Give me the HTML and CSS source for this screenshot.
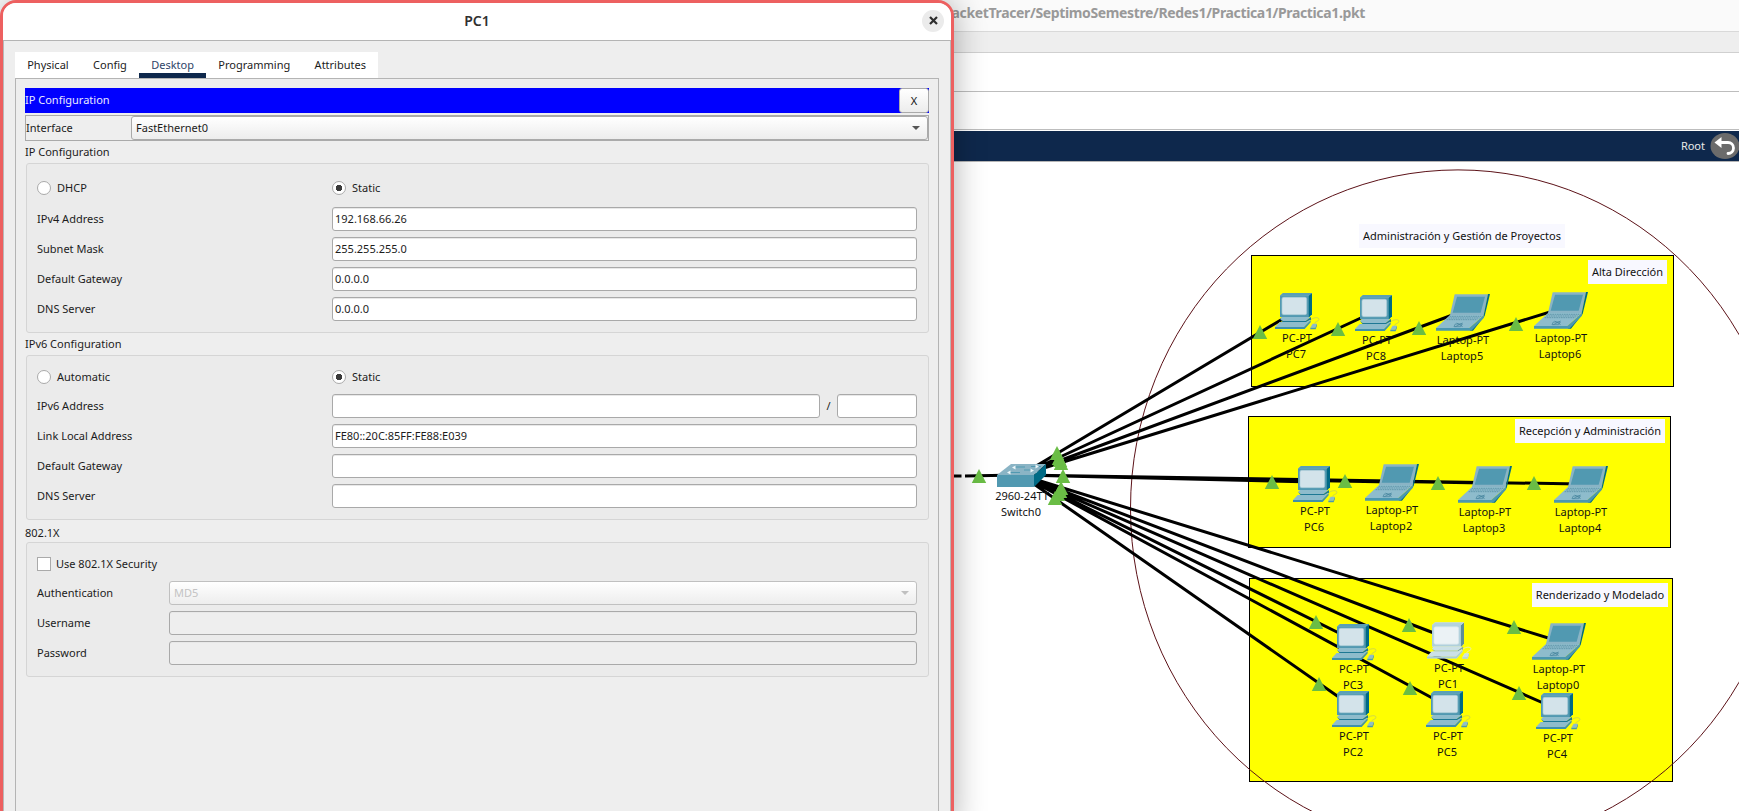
FILE: index.html
```
<!DOCTYPE html>
<html lang="es"><head><meta charset="utf-8"><title>PC1</title><link rel="stylesheet" href="styles.css"></head>
<body>
<div class="screen">
<main class="main-window">
  <header class="main-title">PacketTracer/SeptimoSemestre/Redes1/Practica1/Practica1.pkt</header>
  <div class="menubar"></div>
  <div class="toolbar"></div>
  <div class="toolbar second"></div>
  <div class="navbar"><span>Root</span>
    <svg width="30" height="30" viewBox="0 0 30 30"><ellipse cx="15" cy="13" rx="14.500" ry="13" fill="#6b6b6b"/><path d="M10 9.500H18a5.500 5.500 0 0 1 0 11" fill="none" stroke="#fff" stroke-width="2.800" stroke-linecap="round"/><path d="M4.500 9.500l7-5.500v11z" fill="#fff"/></svg>
  </div>
  <svg class="canvas" width="785" height="649" viewBox="954 162 785 649">
    <defs>
      <g id="pc"><g transform="scale(.3333)">
        <path d="M15 8L24 0H111V64L101 72H15z" fill="#8ab4c5"/>
        <path d="M15 8H101V72H15z" fill="#5199b1"/><path d="M101 8L111 0V64L101 74z" fill="#006a85"/><path d="M15 8L24 0H111L101 8z" fill="#5aa0b6"/>
        <rect x="21" y="13" width="74" height="52" rx="5" fill="#d3e3ea" stroke="#a9cad6" stroke-width="2"/>
        <path d="M21 72H103V76L92 84H23L15 78z" fill="#8ebccc"/><path d="M15 78L23 84H92L108 72V80L94 88H23z" fill="#1d7894"/>
        <path d="M14 87H93L105 80V84L87 102H0z" fill="#8ebccc"/><path d="M0 102H87L107 82V88L89 108H0z" fill="#3f90aa"/>
        <path d="M108 80C116 72 136 72 131 81C129 87 120 84 119 92" fill="none" stroke="#b9c46a" stroke-width="2"/>
        <path d="M106 104L113 92H126L121 104z" fill="#8ebccc"/><path d="M106 104H121L126 92V98L122 109H106z" fill="#4a97b0"/>
      </g></g>
      <g id="laptop"><g transform="scale(.3333)">
        <path d="M56 1H156L143 63H42z" fill="#8ab4c5"/><path d="M63 8H147L134 56H50z" fill="#5199b1"/>
        <path d="M156 0H162L146 66L111 110H101L143 64z" fill="#006a85"/>
        <path d="M42 63H144L100 102H0z" fill="#8ebccc"/><path d="M0 102H100L144 64V71L106 110H0z" fill="#4a97b0"/>
        <path d="M41 67H136M37 72H131M32 77H124" stroke="#4d879b" stroke-width="2" stroke-dasharray="5 2"/>
        <path d="M58 90H79L74 98H54zM62 87L80 98M80 87L58 98" fill="none" stroke="#3f819a" stroke-width="2"/>
      </g></g>
      <path id="up" d="M0-8L7.200 6H-7.200z" fill="#6abd45"/>
    </defs>
    <rect x="1251.500" y="255.500" width="422" height="131" class="zone"/>
    <rect x="1248.500" y="416.500" width="422" height="131" class="zone"/>
    <rect x="1249.500" y="578.500" width="423" height="203" class="zone"/>
    <ellipse cx="1458" cy="508.400" rx="327.500" ry="338.500" class="site"/>
    <g class="links">
      <path d="M954 476h7.500M965 476L1020 475"/>
      <path d="M1021 475L1296 311M1021 475L1376 311M1021 475L1466 310M1021 475L1563 308"/>
      <path d="M1021 475L1314 482M1021 475L1391 482M1021 475L1484 483M1021 475L1580 484"/>
      <path d="M1021 475L1558 641M1021 475L1447 638M1021 475L1557 709M1021 475L1353 640M1021 475L1447 706M1021 475L1353 707"/>
    </g>
    <g class="names">
      <text x="1297" y="342">PC-PT</text><text x="1296" y="358">PC7</text>
      <text x="1377" y="344">PC-PT</text><text x="1376" y="360">PC8</text>
      <text x="1463" y="344">Laptop-PT</text><text x="1462" y="360">Laptop5</text>
      <text x="1561" y="342">Laptop-PT</text><text x="1560" y="358">Laptop6</text>
      <text x="1315" y="515">PC-PT</text><text x="1314" y="531">PC6</text>
      <text x="1392" y="514">Laptop-PT</text><text x="1391" y="530">Laptop2</text>
      <text x="1485" y="516">Laptop-PT</text><text x="1484" y="532">Laptop3</text>
      <text x="1581" y="516">Laptop-PT</text><text x="1580" y="532">Laptop4</text>
      <text x="1354" y="673">PC-PT</text><text x="1353" y="689">PC3</text>
      <text x="1449" y="672">PC-PT</text><text x="1448" y="688">PC1</text>
      <text x="1559" y="673">Laptop-PT</text><text x="1558" y="689">Laptop0</text>
      <text x="1354" y="740">PC-PT</text><text x="1353" y="756">PC2</text>
      <text x="1448" y="740">PC-PT</text><text x="1447" y="756">PC5</text>
      <text x="1558" y="742">PC-PT</text><text x="1557" y="758">PC4</text>
      <text x="1022" y="500">2960-24TT</text><text x="1021" y="516">Switch0</text>
    </g>
    <g class="notes">
      <rect x="1359" y="224" width="206" height="24"/><text x="1462" y="240">Administración y Gestión de Proyectos</text>
      <rect x="1588" y="260" width="79" height="24"/><text x="1627.500" y="276">Alta Dirección</text>
      <rect x="1515" y="419" width="150" height="24"/><text x="1590" y="435">Recepción y Administración</text>
      <rect x="1532" y="583" width="136" height="24"/><text x="1600" y="599">Renderizado y Modelado</text>
    </g>
    <g>
      <path d="M997 475L1011 464H1046L1034 475z" fill="#8ab4c5"/><path d="M997 475H1034V487H997z" fill="#5199b1"/><path d="M1034 475L1046 464V475L1034 487z" fill="#006a85"/>
      <path d="M1014 467h11M1031 466.500h10M1009 472.500h11M1024 470h9" stroke="#5199b1" stroke-width="1.200"/>
      <path d="M1012 467.500l3.500-2v4zM1039 466.500l-3.500-2v4zM1007 472.500l3.500-2v4zM1034 470.500l-3.500-2v4z" fill="#eef7fa"/>
    </g>
    <use href="#pc" x="1275" y="293"/><use href="#pc" x="1355" y="295"/>
    <use href="#laptop" x="1436" y="294"/><use href="#laptop" x="1534" y="292"/>
    <use href="#pc" x="1293" y="466"/><use href="#laptop" x="1365" y="464"/><use href="#laptop" x="1458" y="466"/><use href="#laptop" x="1554" y="466"/>
    <use href="#pc" x="1332" y="624"/><use href="#pc" x="1427" y="622.500" class="selected-base"/><use href="#pc" x="1427" y="622.500" class="selected"/><use href="#laptop" x="1532" y="623"/>
    <use href="#pc" x="1332" y="691"/><use href="#pc" x="1426" y="691"/><use href="#pc" x="1536" y="693"/>
    <use href="#up" x="979" y="477"/>
    <use href="#up" x="1057" y="454"/><use href="#up" x="1059" y="459"/><use href="#up" x="1060" y="461"/><use href="#up" x="1061" y="464"/>
    <use href="#up" x="1063" y="477"/>
    <use href="#up" x="1061" y="489"/><use href="#up" x="1060" y="492"/><use href="#up" x="1058" y="495"/><use href="#up" x="1055" y="499"/>
    <use href="#up" x="1260" y="333"/><use href="#up" x="1338" y="330"/><use href="#up" x="1419" y="329"/><use href="#up" x="1516" y="325"/>
    <use href="#up" x="1272" y="483"/><use href="#up" x="1345" y="482"/><use href="#up" x="1438" y="484"/><use href="#up" x="1534" y="484"/>
    <use href="#up" x="1316" y="623"/><use href="#up" x="1409" y="626"/><use href="#up" x="1514" y="628"/>
    <use href="#up" x="1319" y="685"/><use href="#up" x="1410" y="689"/><use href="#up" x="1519" y="694"/>
  </svg>
</main>
<section class="dialog">
  <header class="dialog-title"><span class="title-text">PC1</span><button class="close"><svg width="9" height="9" viewBox="0 0 9 9"><path d="M1 1l7 7M8 1l-7 7" stroke="#2e2e2e" stroke-width="2.200"/></svg></button></header>
  <div class="dialog-body">
    <nav class="tabs"><a class="tab">Physical</a><a class="tab">Config</a><a class="tab active">Desktop</a><a class="tab">Programming</a><a class="tab">Attributes</a></nav>
    <div class="page">
      <div class="app-title"><span>IP Configuration</span><button class="x">X</button></div>
      <div class="iface"><span>Interface</span><div class="select"><span>FastEthernet0</span><i class="caret"></i></div></div>
      <h2>IP Configuration</h2>
      <div class="group ip4">
        <div class="row"><label class="opt"><i class="radio"></i>DHCP</label><label class="opt"><i class="radio on"></i>Static</label></div>
        <div class="row"><span>IPv4 Address</span><div class="input">192.168.66.26</div></div>
        <div class="row"><span>Subnet Mask</span><div class="input">255.255.255.0</div></div>
        <div class="row"><span>Default Gateway</span><div class="input">0.0.0.0</div></div>
        <div class="row"><span>DNS Server</span><div class="input">0.0.0.0</div></div>
      </div>
      <h2>IPv6 Configuration</h2>
      <div class="group ip6">
        <div class="row"><label class="opt"><i class="radio"></i>Automatic</label><label class="opt"><i class="radio on"></i>Static</label></div>
        <div class="row"><span>IPv6 Address</span><div class="prefix"><div class="input"></div><span>/</span><div class="input"></div></div></div>
        <div class="row"><span>Link Local Address</span><div class="input">FE80::20C:85FF:FE88:E039</div></div>
        <div class="row"><span>Default Gateway</span><div class="input"></div></div>
        <div class="row"><span>DNS Server</span><div class="input"></div></div>
      </div>
      <h2 class="h-dot1x">802.1X</h2>
      <div class="group dot1x">
        <label class="opt check-row"><i class="check"></i>Use 802.1X Security</label>
        <div class="row"><span>Authentication</span><div class="select disabled"><span>MD5</span><i class="caret"></i></div></div>
        <div class="row"><span>Username</span><div class="input off"></div></div>
        <div class="row"><span>Password</span><div class="input off"></div></div>
      </div>
    </div>
  </div>
</section>
</div>
</body></html>
```
FILE: styles.css
```
* { box-sizing: border-box; }
body { margin: 0; font: 11px/16px "Noto Sans", sans-serif; color: #1c1c1c; }
button { font: inherit; padding: 0; border: 0; }
h2 { margin: 0; font: inherit; height: 22px; line-height: 22px; }
.h-dot1x { line-height: 26px; }
.screen { width: 1739px; height: 811px; overflow: hidden; display: grid; grid-template-columns: 954px 785px; background: #fff; }
.dialog { grid-area: 1 / 1; position: relative; height: 830px; border: 3px solid #ed6060; border-radius: 16px 16px 0 0; background: #eee; overflow: hidden; box-shadow: 0 0 32px rgba(0,0,0,.32); }
.main-window { grid-area: 1 / 1 / 2 / 3; padding-left: 954px; height: 811px; }
.main-title { height: 32px; background: #fafafa; border-bottom: 1px solid #d9d9d9; font-size: 14px; letter-spacing: -.36px; font-weight: 700; line-height: 26px; color: #999; display: flex; justify-content: flex-end; padding-right: 374px; white-space: nowrap; margin-left: -40px; }
.menubar { height: 21px; background: #eee; border-bottom: 1px solid #d0d0d0; }
.toolbar { height: 39px; border-bottom: 1px solid #bdbdbd; }
.toolbar.second { height: 38px; }
.navbar { margin-top: 1px; height: 31px; background: #0e284c; border-bottom: 1px solid #b5b5b5; color: #e8e8e8; display: flex; justify-content: flex-end; align-items: flex-start; gap: 5px; overflow: hidden; }
.navbar span { line-height: 30px; }
.navbar svg { margin-top: 2px; margin-right: -1px; }
.canvas { display: block; }
.zone { fill: #ff0; stroke: #000; }
.site { fill: none; stroke: #5c1218; }
.links { stroke: #000; stroke-width: 3; fill: none; }
.names, .notes { font-size: 11px; text-anchor: middle; fill: #111; }
.notes rect { fill: #f8f8ff; }
.selected-base { filter: grayscale(1) brightness(2); }
.selected { opacity: .45; }

.dialog-title { height: 38px; background: #fff; border-bottom: 1px solid #b4b4b4; display: grid; grid-template-columns: 1fr 22px 7px; align-items: center; padding-bottom: 2px; }
.title-text { grid-area: 1 / 1 / 2 / 4; text-align: center; font-size: 14px; font-weight: 600; color: #303030; }
.close { grid-area: 1 / 2; width: 22px; height: 22px; border-radius: 50%; background: #ebebeb; display: grid; place-items: center; }
.dialog-body { padding: 11px 11px 0 11px; border: solid #b8b8b8; border-width: 0 1px; height: 790px; }
.tabs { display: flex; height: 26px; width: 363px; background: #fff; justify-content: space-between; }
.tab { padding: 5px 12.200px 0; height: 26px; }
.tab.active { color: #2e4468; border-bottom: 5px solid #0e284c; }
.page { border: 1px solid #b4b4b4; height: 760px; padding: 9px 9px 0; }
.app-title { height: 25px; background: #00f; color: #e9e9ff; line-height: 24px; display: flex; justify-content: space-between; }
.x { width: 30px; height: 25px; border: 1px solid #aaa; border-radius: 3px; background: linear-gradient(#fff, #ececec); color: #111; }
.iface { margin-top: 2px; height: 26px; border: 1px solid #aaa; display: grid; grid-template-columns: 105px 1fr; line-height: 24px; }
.select { border: 1px solid #aaa; border-radius: 3px; background: linear-gradient(#fff, #ededed); height: 24px; line-height: 22px; display: flex; justify-content: space-between; align-items: center; padding: 0 7px 0 4px; }
.caret { border: 4px solid transparent; border-top-color: #555; border-bottom: 0; }
.disabled { color: #c3c3c3; border-color: #c0c0c0; }
.disabled .caret { border-top-color: #c0c0c0; }
.group { margin-left: 1px; border: 1px solid #d5d5d5; border-radius: 3px; background: #ebebeb; padding: 0 11px 0 10px; display: flex; flex-direction: column; gap: 6px; }
.row { display: grid; grid-template-columns: 295px 1fr; line-height: 24px; height: 24px; align-items: center; }
.input { height: 24px; border: 1px solid #a9a9a9; border-radius: 3px; background: #fff; box-shadow: inset 0 1px #e8e8e8; padding-left: 2px; line-height: 22px; }
.input.off { background: #eee; }
.opt { display: flex; align-items: center; gap: 6px; }
.radio, .check { width: 14px; height: 14px; border: 1px solid #aaa; background: #fff; }
.radio { border-radius: 50%; }
.radio.on { background: radial-gradient(circle, #3a3a3a 0 3px, #fff 3.500px); }
.ip4 { height: 170px; padding-top: 12px; }
.ip4 .row:first-child { margin-bottom: 1px; }
.ip6 { height: 165px; padding-top: 9px; }
.ip6 .row:first-child { margin-bottom: -1px; }
.prefix { display: grid; grid-template-columns: 488px 17px 80px; }
.prefix span { text-align: center; }
.dot1x { height: 135px; padding-top: 9px; }
.dot1x .row { grid-template-columns: 132px 1fr; }
.check-row { height: 24px; margin-bottom: -1px; gap: 5px; }
```
